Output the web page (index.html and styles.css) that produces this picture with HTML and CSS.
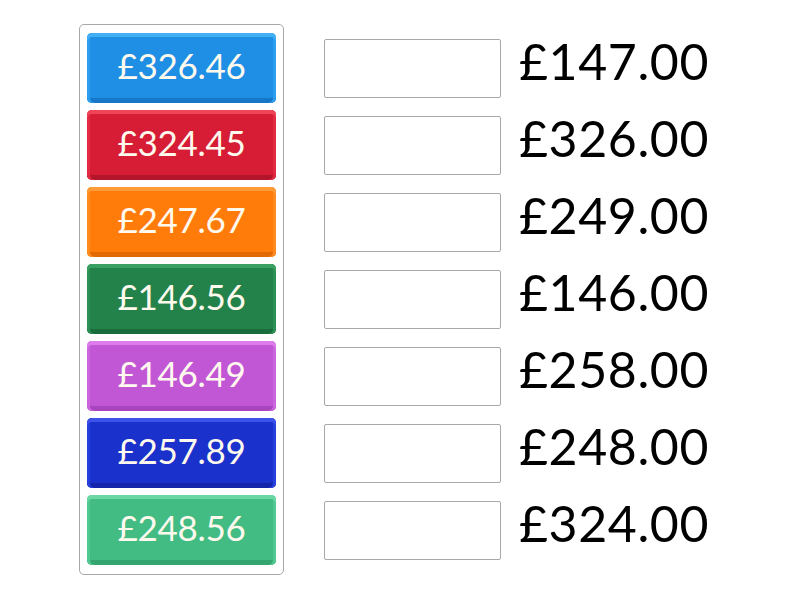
FILE: index.html
```html
<!DOCTYPE html>
<html>
<head>
<meta charset="utf-8">
<link rel="stylesheet" href="styles.css">
</head>
<body>
<div class="board">
  <div class="bank">
    <div class="tile t-blue">£326.46</div>
    <div class="tile t-red">£324.45</div>
    <div class="tile t-orange">£247.67</div>
    <div class="tile t-green">£146.56</div>
    <div class="tile t-purple">£146.49</div>
    <div class="tile t-navy">£257.89</div>
    <div class="tile t-mint">£248.56</div>
  </div>
  <div class="targets">
    <div class="row"><div class="slot"></div><div class="label">£147.00</div></div>
    <div class="row"><div class="slot"></div><div class="label">£326.00</div></div>
    <div class="row"><div class="slot"></div><div class="label">£249.00</div></div>
    <div class="row"><div class="slot"></div><div class="label">£146.00</div></div>
    <div class="row"><div class="slot"></div><div class="label">£258.00</div></div>
    <div class="row"><div class="slot"></div><div class="label">£248.00</div></div>
    <div class="row"><div class="slot"></div><div class="label">£324.00</div></div>
  </div>
</div>
</body>
</html>
```

FILE: styles.css
```css
html, body {
  margin: 0;
  padding: 0;
  background: #ffffff;
}
body {
  width: 800px;
  height: 600px;
  overflow: hidden;
  font-family: "Lato", "Open Sans", sans-serif;
}
.board {
  display: flex;
  align-items: flex-start;
  gap: 40px;
  padding: 24px 0 0 79px;
}
.bank {
  width: 189px;
  padding: 8px 7px 9px 7px;
  border: 1px solid #a8a8a8;
  border-radius: 5px;
  display: flex;
  flex-direction: column;
  gap: 7px;
}
.tile {
  height: 70px;
  border-radius: 5px;
  display: flex;
  align-items: center;
  justify-content: center;
  color: #fff9ee;
  font-size: 35px;
  letter-spacing: -0.3px;
  box-sizing: border-box;
  padding-bottom: 6px;
}
.t-blue {
  background: #1f8fe5;
  box-shadow: inset 0 4px 0 #43b0f6, inset 3px 0 0 #2c9ef0, inset -3px 0 0 #2c9ef0, inset 0 -5px 0 #1677c8;
}
.t-red {
  background: #d61d35;
  box-shadow: inset 0 4px 0 #ef4357, inset 3px 0 0 #e22b42, inset -3px 0 0 #e22b42, inset 0 -5px 0 #b3152a;
}
.t-orange {
  background: #ff7c0b;
  box-shadow: inset 0 4px 0 #ff9b37, inset 3px 0 0 #ff8a1d, inset -3px 0 0 #ff8a1d, inset 0 -5px 0 #e26a05;
}
.t-green {
  background: #22824a;
  box-shadow: inset 0 4px 0 #3aa062, inset 3px 0 0 #2b9055, inset -3px 0 0 #2b9055, inset 0 -5px 0 #186c3b;
}
.t-purple {
  background: #c257d6;
  box-shadow: inset 0 4px 0 #dc7deb, inset 3px 0 0 #cc66df, inset -3px 0 0 #cc66df, inset 0 -5px 0 #a844bd;
}
.t-navy {
  background: #1b31cc;
  box-shadow: inset 0 4px 0 #3c52e8, inset 3px 0 0 #2640dd, inset -3px 0 0 #2640dd, inset 0 -5px 0 #1425a9;
}
.t-mint {
  background: #43bc83;
  box-shadow: inset 0 4px 0 #6bd8a3, inset 3px 0 0 #52c992, inset -3px 0 0 #52c992, inset 0 -5px 0 #34a56f;
}
.targets {
  display: flex;
  flex-direction: column;
  gap: 7px;
  padding-top: 9px;
}
.row {
  height: 70px;
  display: flex;
  align-items: center;
  gap: 18px;
}
.slot {
  width: 175px;
  height: 57px;
  border: 1px solid #a8a8a8;
  border-radius: 2px;
  background: #fff;
}
.label {
  font-size: 50px;
  color: #000;
  letter-spacing: 0.6px;
  padding-bottom: 14px;
}
```
